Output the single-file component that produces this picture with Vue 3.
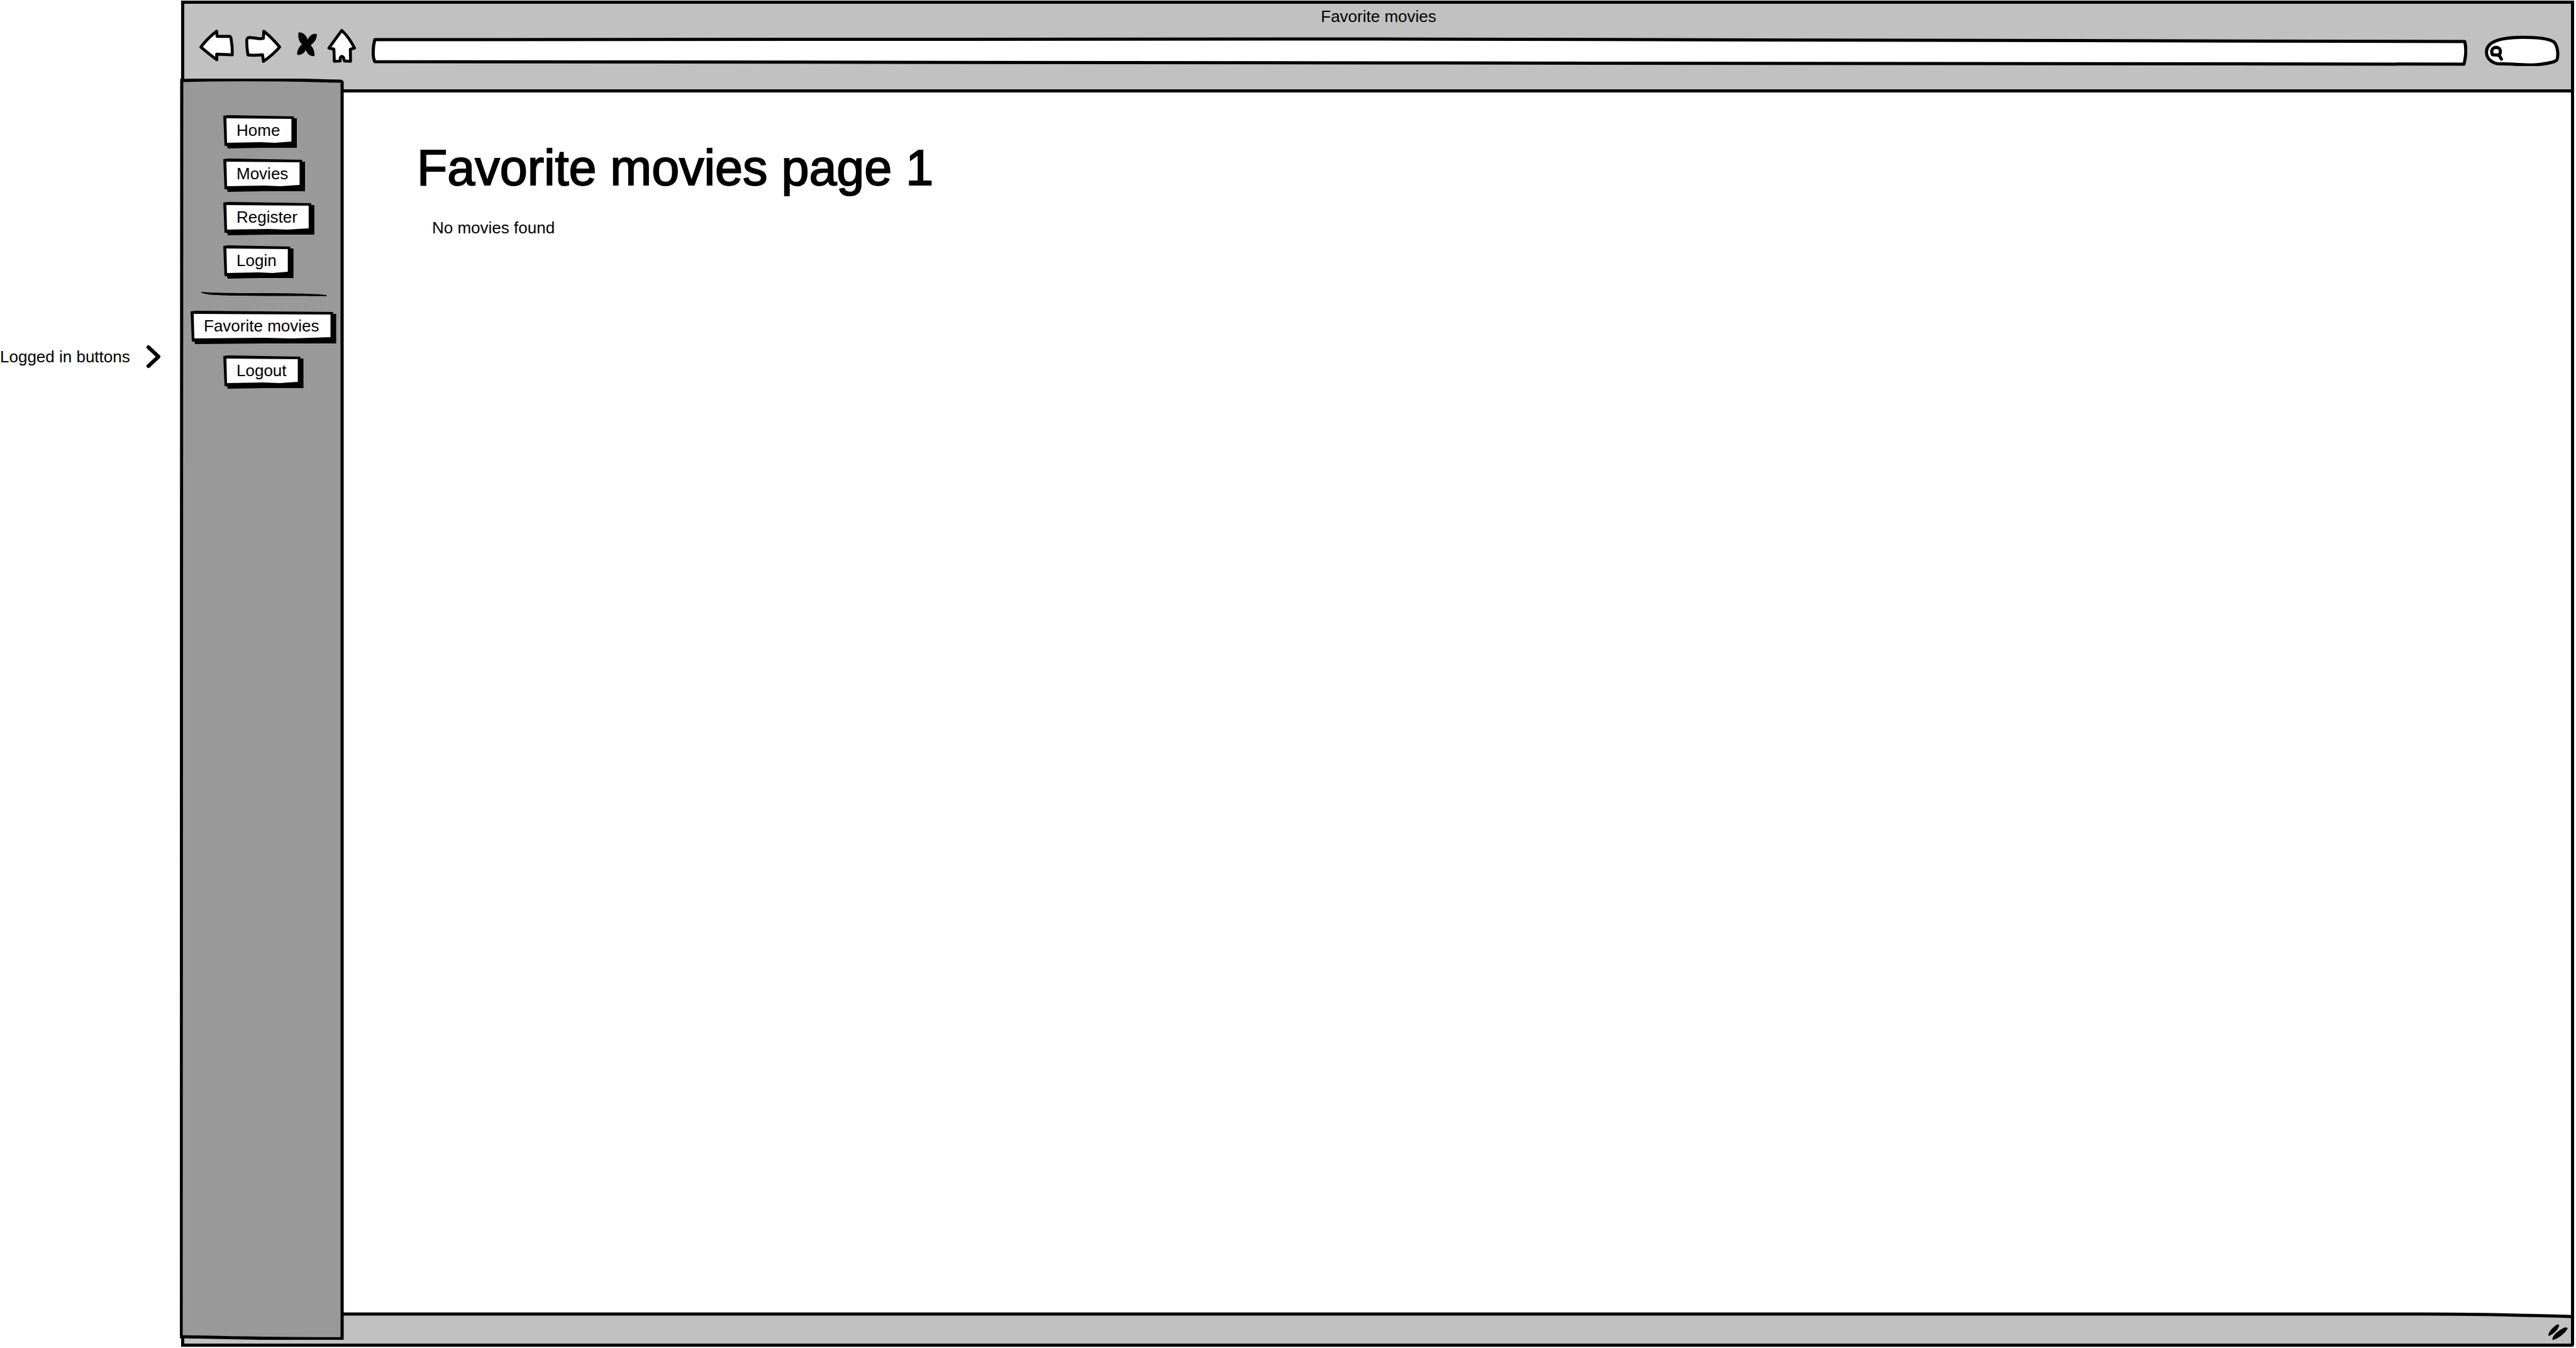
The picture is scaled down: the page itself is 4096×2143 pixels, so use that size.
<script setup>
import { ref } from 'vue'

const address = ref('')
const query = ref('')
const mainLinks = ['Home', 'Movies', 'Register', 'Login']
const memberLinks = [
  { label: 'Favorite movies', wide: true },
  { label: 'Logout', wide: false },
]
</script>

<template>
  <div class="page">
    <aside class="note">
      <p>Logged in buttons</p>
      <svg class="chevron" viewBox="0 0 24 38" aria-hidden="true">
        <path d="M4 4 L20 19 L4 34" fill="none" stroke="#000" stroke-width="6" stroke-linecap="round" stroke-linejoin="round" />
      </svg>
    </aside>

    <div class="window">
      <header class="toolbar">
        <p class="window-title">Favorite movies</p>
        <div class="controls">
          <button class="tool" type="button" aria-label="Back">
            <svg class="arrow" viewBox="110 130 181 187">
              <path d="M126 226 Q160 182 202 150 L204 175 L266 175 Q271 178 272 192 Q278 225 277 263 L202 260 L203 287 Q165 260 126 226 Z" />
            </svg>
          </button>
          <button class="tool" type="button" aria-label="Forward">
            <svg class="arrow" viewBox="335 130 181 187">
              <path d="M506 226 Q468 180 430 150 L428 184 Q405 188 390 183 L362 180 Q347 180 348 198 Q348 225 354 264 Q380 267 424 263 L428 295 Q475 262 506 226 Z" />
            </svg>
          </button>
          <button class="tool" type="button" aria-label="Stop">
            <svg class="stop" viewBox="557 130 133 187">
              <path class="solid" d="M595 156 C617 153 632 170 640 190 C648 170 665 160 683 163 C685 187 670 205 654 217 C668 232 673 250 672 269 C650 272 638 258 630 240 C622 256 606 266 589 263 C587 243 598 225 612 213 C597 198 592 180 595 156 Z" />
            </svg>
          </button>
          <button class="tool" type="button" aria-label="Home page">
            <svg class="house" viewBox="733 130 145 187">
              <path d="M804 146 Q780 178 742 231 L766 236 L768 294 L796 293 L797 276 Q804 265 812 276 L817 293 L846 294 L845 236 L865 231 Q840 180 804 146 Z" />
            </svg>
          </button>
          <div class="field address">
            <svg viewBox="0 0 3331 62" preserveAspectRatio="none" aria-hidden="true">
              <path vector-effect="non-scaling-stroke" d="M5 20 C500 20 1100 19 1600 19 C2300 20 2900 23 3327 23 C3330 34 3329 46 3326 59 C2900 60 2300 57 1600 57 C1000 57 500 54 5 55 C1 48 2 30 5 20 Z" />
            </svg>
            <input v-model="address" type="text" aria-label="Address" />
          </div>
          <div class="field search">
            <svg viewBox="249 130 360 187" aria-hidden="true">
              <path stroke-width="15" d="M320 307 C285 305 256 282 257 248 C258 210 300 180 430 179 C520 179 565 190 582 202 C600 220 604 265 596 287 C590 298 540 308 480 312 C430 313 380 306 320 307 Z" />
              <path stroke-width="15" d="M286 263 C279 249 281 228 303 227 C327 228 328 250 318 265 Z M317 264 L329 284" />
            </svg>
            <input v-model="query" type="search" aria-label="Search" />
          </div>
        </div>
      </header>

      <nav class="sidebar" aria-label="Site">
        <svg class="panel" viewBox="0 0 261 2004" preserveAspectRatio="none" aria-hidden="true">
          <path vector-effect="non-scaling-stroke" d="M3 3 C80 1 180 2 255 4 Q259 4 258 9 L258 2002 C160 2003 90 2001 2 1999 Z" />
        </svg>
        <ul>
          <li v-for="label in mainLinks" :key="label">
            <button class="link" type="button"><span>{{ label }}</span></button>
          </li>
        </ul>
        <svg class="rule" viewBox="0 0 200 8" aria-hidden="true">
          <path d="M0 0 C20 2 60 2 100 2 C140 2 185 3 199 5 L199 7 C160 6 110 7 70 6 C40 6 10 6 0 1 Z" />
        </svg>
        <ul>
          <li v-for="item in memberLinks" :key="item.label" :class="{ wide: item.wide }">
            <button class="link" type="button"><span>{{ item.label }}</span></button>
          </li>
        </ul>
      </nav>

      <main>
        <h1>Favorite movies page 1</h1>
        <p>No movies found</p>
      </main>

      <footer>
        <svg class="edge" viewBox="0 0 3795 50" preserveAspectRatio="none" aria-hidden="true">
          <path class="fill" d="M0 3 L3560 3 Q3660 3 3795 7 L3795 50 L0 50 Z" />
          <path class="line" vector-effect="non-scaling-stroke" d="M0 3 L3560 3 Q3660 3 3795 7" />
        </svg>
        <svg class="grip" viewBox="550 180 105 88" aria-hidden="true">
          <path d="M556 243 C553 225 580 197 600 187 L608 190 C608 208 580 235 559 243 Z" />
          <path d="M576 262 C570 245 608 212 637 201 L649 205 C643 225 605 255 579 263 Z" />
        </svg>
      </footer>
    </div>
  </div>
</template>

<style>
body {
  margin: 0;
  background: #fff;
}
</style>

<style scoped>
.page {
  display: flex;
  box-sizing: border-box;
  min-height: 100vh;
  padding: 1px 3px 2px 0;
  color: #000;
  font-family: "Liberation Sans", Arial, sans-serif;
  font-size: 26px;
  line-height: 30px;
}

p,
h1,
ul {
  margin: 0;
  padding: 0;
}

ul {
  list-style: none;
}

button,
input {
  margin: 0;
  padding: 0;
  border: 0;
  background: none;
  color: inherit;
  font: inherit;
}

svg {
  display: block;
}

.note {
  display: flex;
  flex: 0 0 288px;
  align-items: center;
  align-self: flex-start;
  gap: 25px;
  padding-top: 547px;
  box-sizing: border-box;
  white-space: nowrap;
}

.chevron {
  width: 24px;
  height: 38px;
}

.window {
  display: grid;
  flex: 1;
  grid-template-columns: 254px 1fr;
  grid-template-rows: auto 1fr auto;
  border: 5px solid #000;
  border-radius: 0 0 4px 0;
}

.toolbar {
  grid-column: 1 / 3;
  padding: 5px 18px 37px 21px;
  border-bottom: 5px solid #000;
  background: #c1c1c1;
}

.window-title {
  text-align: center;
}

.controls {
  display: flex;
  gap: 14px;
  margin-top: 2px;
}

.tool path,
.field path {
  fill: #fff;
  stroke: #000;
  stroke-linejoin: round;
  stroke-linecap: round;
}

.tool path {
  stroke-width: 14px;
}

.tool .solid {
  fill: #000;
  stroke: none;
}

.arrow {
  width: 60px;
  height: 62px;
}

.stop {
  width: 44px;
  height: 62px;
}

.house {
  width: 48px;
  height: 62px;
}

.field {
  position: relative;
  height: 62px;
}

.field svg {
  position: absolute;
  inset: 0;
  width: 100%;
  height: 100%;
}

.field input {
  position: relative;
  box-sizing: border-box;
  width: 100%;
  height: 62px;
  padding: 16px 12px 0;
  outline: none;
  appearance: none;
}

.address {
  flex: 1;
  margin-left: 9px;
}

.address path {
  stroke-width: 5px;
}

.search {
  width: 119px;
  margin-left: 14px;
}

.search input {
  padding-left: 30px;
}

.sidebar {
  position: relative;
  z-index: 1;
  grid-row: 2 / 4;
  grid-column: 1;
  margin: -22px 0 6px -7px;
  padding: 58px 0 0 17px;
}

.panel {
  position: absolute;
  inset: 0;
  width: 100%;
  height: 100%;
}

.panel path {
  fill: #999;
  stroke: #000;
  stroke-width: 5px;
}

.sidebar ul {
  position: relative;
  display: flex;
  flex-direction: column;
  gap: 16px;
}

.sidebar li {
  margin-left: 52px;
}

.sidebar .wide {
  margin: 0 0 2px;
}

.rule {
  position: relative;
  width: 200px;
  height: 8px;
  margin: 21px 0 22px 17px;
}

.link {
  position: relative;
  display: block;
  padding: 9px 27px 14px 21px;
  white-space: nowrap;
}

.link::before,
.link::after {
  position: absolute;
  inset: 0;
  content: "";
}

.link::before {
  background: #000;
  clip-path: polygon(0 1px, 8px 0, calc(100% - 5px) 2px, calc(100% - 5px) 5px, 100% 5px, 100% 52px, 50% 52px, 7px 53px, 6px 49px, 2px 49px);
}

.link::after {
  background: #fff;
  clip-path: polygon(5px 5px, calc(100% - 9px) 6px, calc(100% - 9px) 42px, 70% 44px, 50% 43px, 6px 44px);
}

.link span {
  position: relative;
  z-index: 1;
}

main {
  grid-column: 2;
  padding: 76px 48px 48px 116px;
}

h1 {
  font-size: 79px;
  font-weight: 400;
  line-height: 88px;
  -webkit-text-stroke: 2px #000;
}

main p {
  margin: 36px 0 0 24px;
}

footer {
  position: relative;
  display: flex;
  grid-row: 3;
  grid-column: 1 / 3;
  justify-content: flex-end;
  padding: 17px 3px 4px 0;
}

.edge {
  position: absolute;
  inset: 0;
  width: 100%;
  height: 100%;
}

.edge .fill {
  fill: #c1c1c1;
}

.edge .line {
  fill: none;
  stroke: #000;
  stroke-width: 5px;
}

.grip {
  position: relative;
  width: 35px;
  height: 29px;
}
</style>
